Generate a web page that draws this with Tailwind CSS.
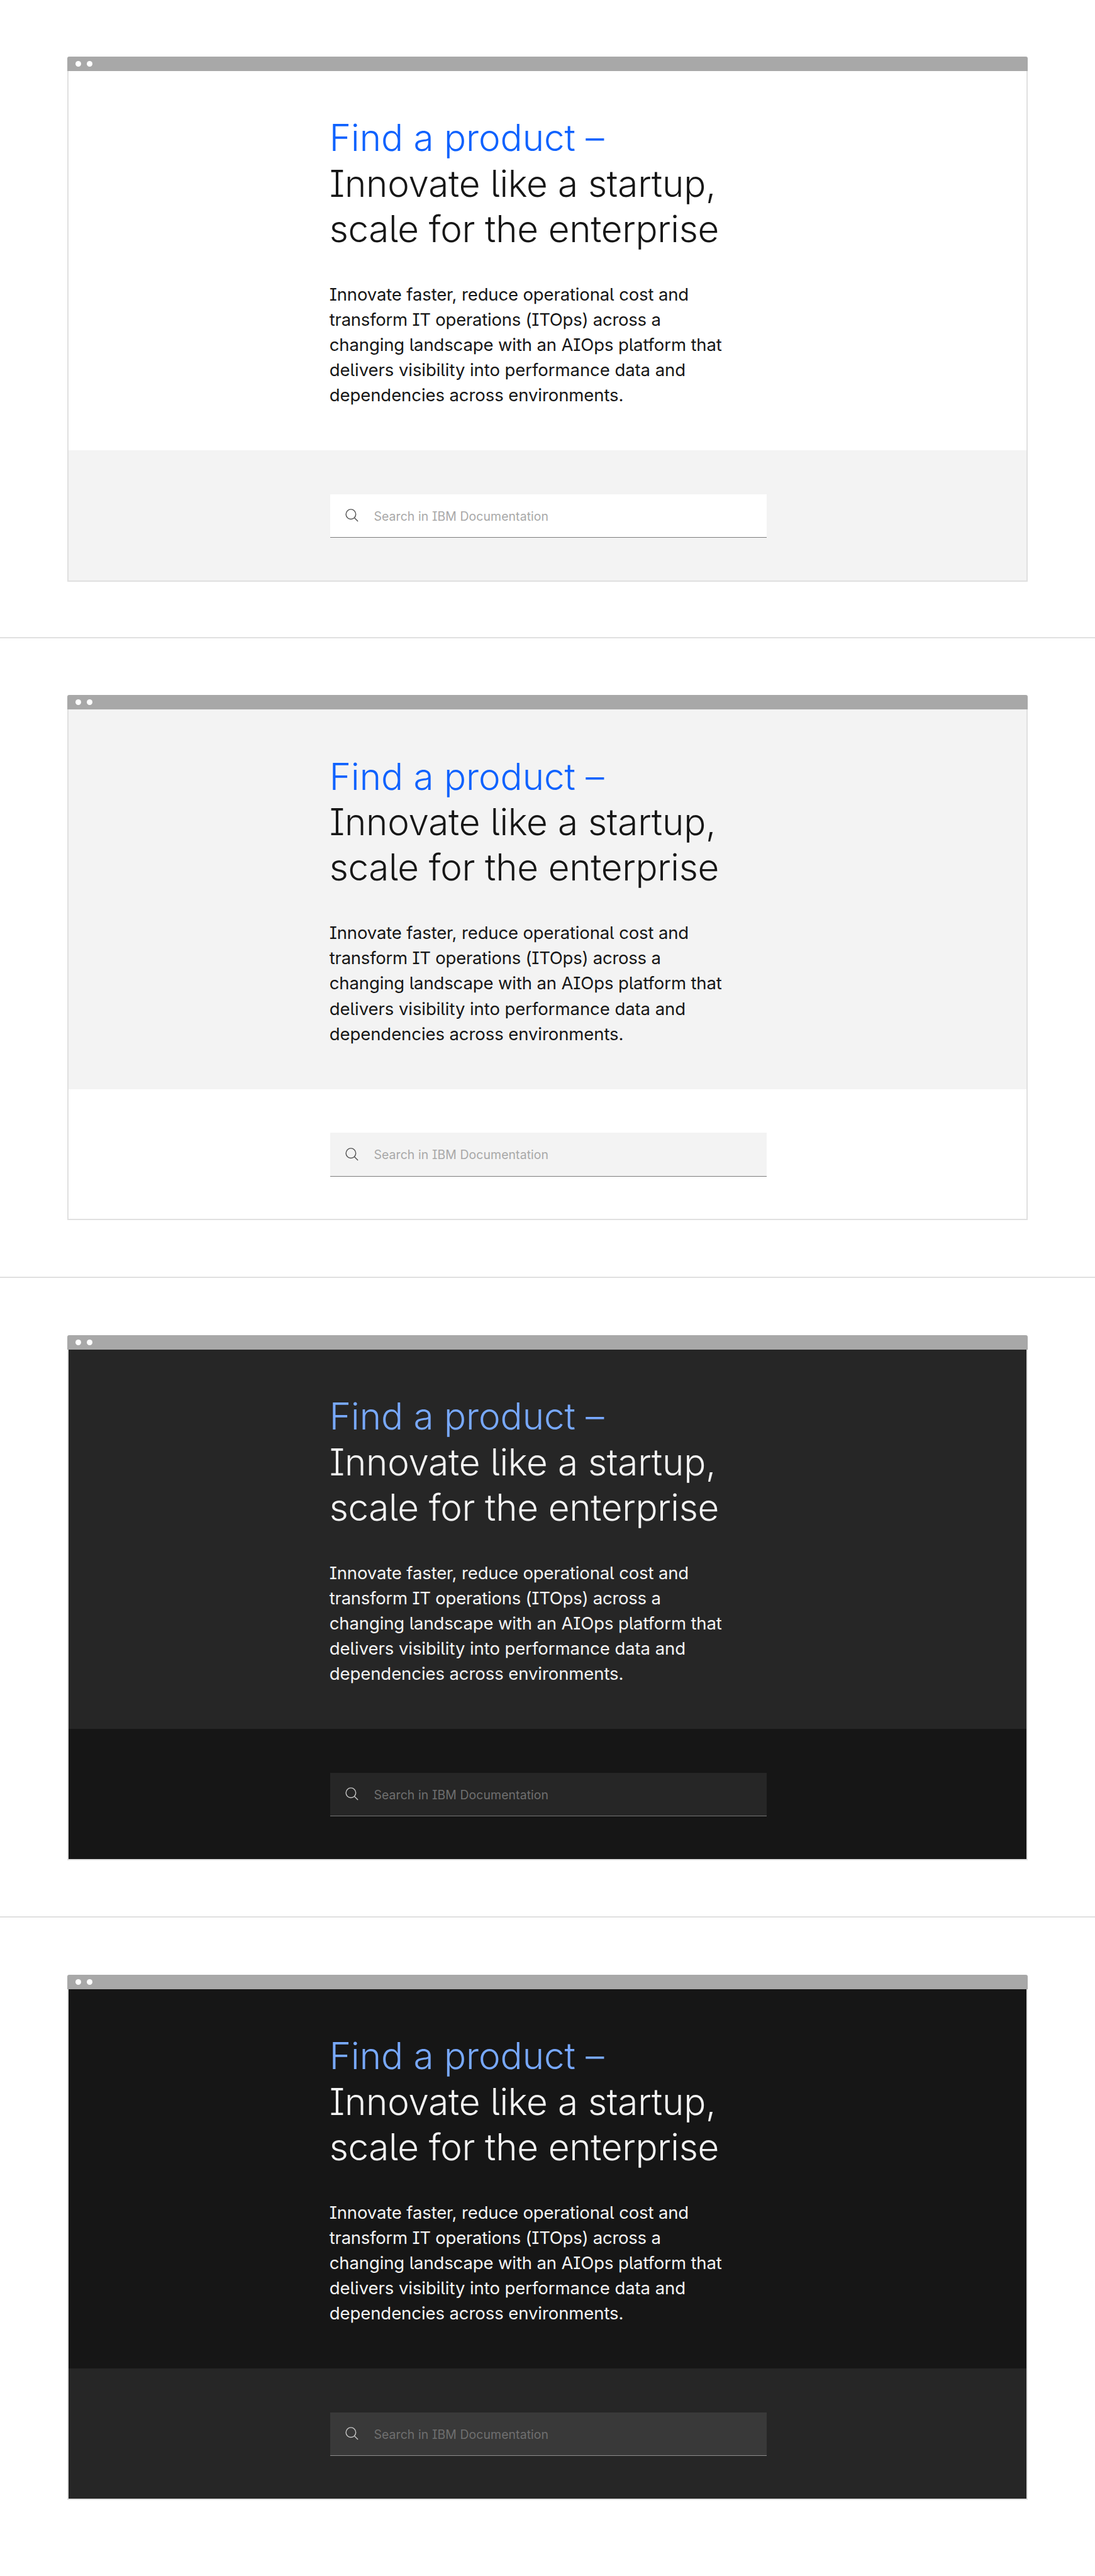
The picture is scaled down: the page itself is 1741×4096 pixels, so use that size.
<!DOCTYPE html>
<html lang="en">
<head>
<meta charset="utf-8">
<title>IBM Documentation search</title>
<script src="https://cdn.jsdelivr.net/npm/@tailwindcss/browser@4"></script>
</head>
<body class="bg-white font-['Inter','Noto_Sans',sans-serif] antialiased [font-feature-settings:'cv05','cv08']">
<main id="themes"></main>
<script>
const themes = [
  { section: 'h-[1015px] pt-[90px] border-b-2', hero: 'bg-white text-[#161616]', accent: 'text-[#0f62fe]', band: 'bg-[#f3f3f3]', field: 'bg-white border-[#7c7c7c] text-[#a8a8a8]', icon: 'text-[#525252]' },
  { section: 'h-[1017px] pt-[90.4px] border-b-2', hero: 'bg-[#f3f3f3] text-[#161616]', accent: 'text-[#0f62fe]', band: 'bg-white', field: 'bg-[#f3f3f3] border-[#7c7c7c] text-[#a8a8a8]', icon: 'text-[#525252]' },
  { section: 'h-[1017px] pt-[91px] border-b-2', hero: 'bg-[#262626] text-[#f4f4f4]', accent: 'text-[#78a9ff]', band: 'bg-[#161616]', field: 'bg-[#262626] border-[#777777] text-[#6f6f6f]', icon: 'text-[#c6c6c6]' },
  { section: 'h-[1047px] pt-[91px]', hero: 'bg-[#161616] text-[#f4f4f4]', accent: 'text-[#78a9ff]', band: 'bg-[#262626]', field: 'bg-[#393939] border-[#8d8d8d] text-[#6f6f6f]', icon: 'text-[#c6c6c6]' }
];
document.getElementById('themes').innerHTML = themes.map(t => `
<section class="${t.section} border-[#e0e0e0] pl-[107.4px]">
  <div class="w-[1526.4px]">
    <div class="flex h-[23px] items-center gap-[8.4px] rounded-t-[3px] bg-[#a8a8a8] pl-[13px]">
      <span class="size-[9px] rounded-full bg-white"></span>
      <span class="size-[9px] rounded-full bg-white"></span>
    </div>
    <div class="border-x-2 border-b-2 border-[#e0e0e0]">
      <div class="${t.hero} h-[603.4px] pt-[70.4px] pl-[414.4px] whitespace-nowrap">
        <h1 class="text-[58.3px] leading-[72.2px] font-light">
          <span class="block ${t.accent}">Find a product –</span>
          <span class="block tracking-[-0.2px]">Innovate like a startup,</span>
          <span class="block tracking-[-0.33px]">scale for the enterprise</span>
        </h1>
        <p class="mt-[47.6px] text-[27.5px] leading-[40.2px]">
          <span class="block tracking-[-0.14px]">Innovate faster, reduce operational cost and</span>
          <span class="block tracking-[-0.24px]">transform IT operations (ITOps) across a</span>
          <span class="block tracking-[-0.13px]">changing landscape with an AIOps platform that</span>
          <span class="block tracking-[-0.06px]">delivers visibility into performance data and</span>
          <span class="block tracking-[-0.08px]">dependencies across environments.</span>
        </p>
      </div>
      <div class="${t.band} h-[206.4px] pt-[69.4px] pl-[415.8px]">
        <div class="${t.field} flex h-[69.4px] w-[694px] items-center gap-[23.3px] border-b pl-[23px]">
          <svg class="size-[23px] ${t.icon}" viewBox="0 0 23 23" fill="none" stroke="currentColor" stroke-width="1.4"><circle cx="9.9" cy="9.7" r="7.8"/><path d="M15.4 15.2l5.7 5.7"/></svg>
          <span class="pt-[2px] text-[19.4px] leading-6 tracking-[0.1px]">Search in IBM Documentation</span>
        </div>
      </div>
    </div>
  </div>
</section>`).join('');
</script>
</body>
</html>
